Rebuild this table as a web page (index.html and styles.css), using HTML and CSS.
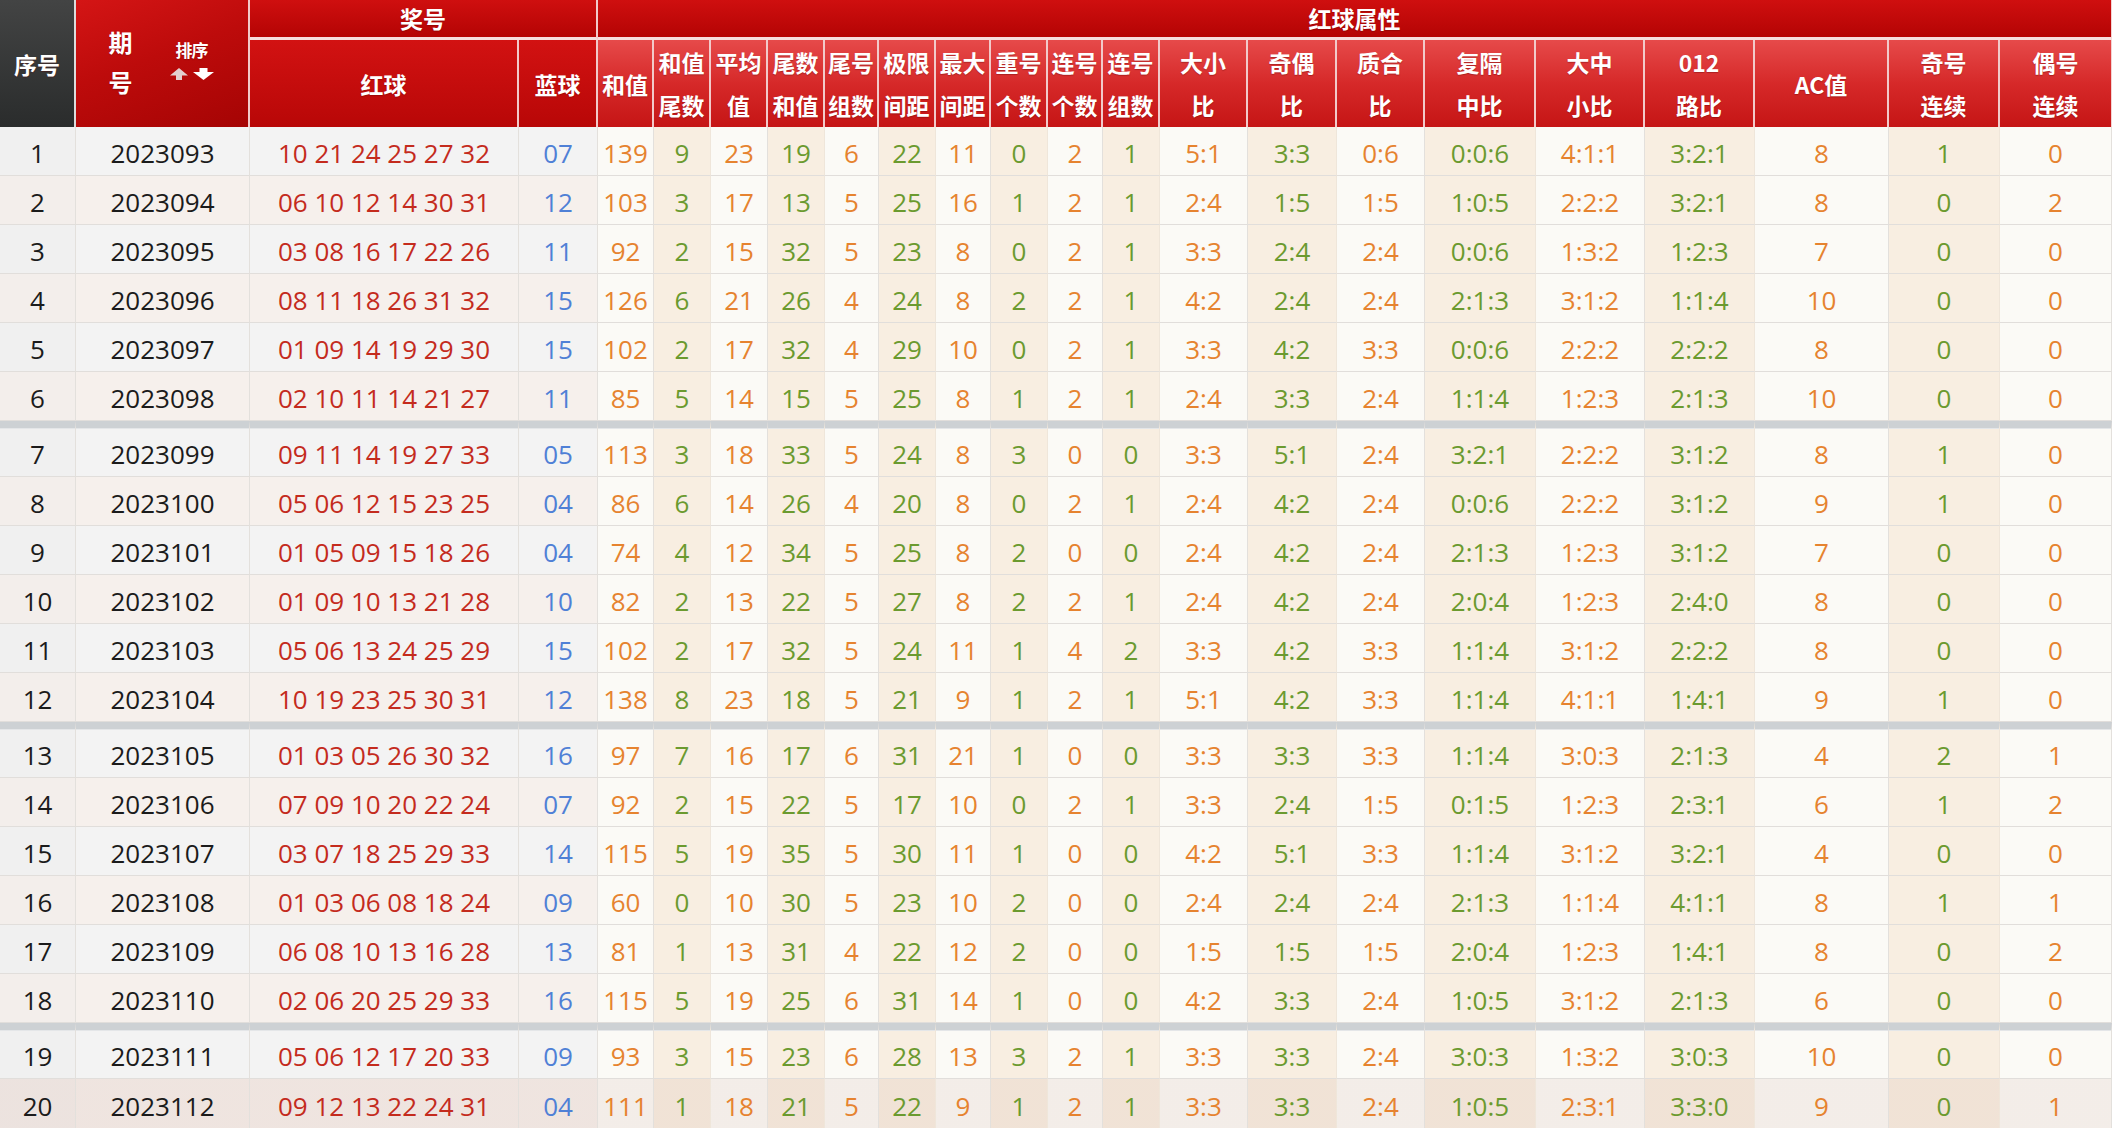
FILE: index.html
```html
<!DOCTYPE html>
<html lang="zh-CN">
<head>
<meta charset="utf-8">
<title>开奖号码属性</title>
<link rel="stylesheet" href="styles.css">
</head>
<body>
<table class="draw">
  <colgroup>
    <col class="c-seq"><col class="c-qh"><col class="c-red"><col class="c-blue">
    <col class="c-56"><col class="c-57"><col class="c-57"><col class="c-57"><col class="c-54">
    <col class="c-57"><col class="c-55"><col class="c-57"><col class="c-55"><col class="c-57">
    <col class="c-88"><col class="c-89"><col class="c-88">
    <col class="c-111"><col class="c-109"><col class="c-110">
    <col class="c-ac"><col class="c-111"><col class="c-112">
  </colgroup>
  <thead>
    <tr class="h1">
      <th rowspan="2" class="hseq">序号</th>
      <th rowspan="2" class="hqh">
        <div class="qh">
          <div class="qh-label"><span>期</span><span>号</span></div>
          <div class="sort">
            <span class="sort-t">排序</span>
            <span class="sort-arrows">
              <svg width="18" height="12" viewBox="0 0 18 12"><polygon points="9,0 18,7.5 12,7.5 12,12 6,12 6,7.5 0,7.5" fill="#e3cfcf"/></svg>
              <svg width="21" height="12" viewBox="0 0 21 12"><polygon points="6.5,0 14.5,0 14.5,4 21,4 10.5,12 0,4 6.5,4" fill="#ffffff"/></svg>
            </span>
          </div>
        </div>
      </th>
      <th colspan="2" class="hgrp">奖号</th>
      <th colspan="19" class="hgrp hlast">红球属性</th>
    </tr>
    <tr class="h2">
      <th class="hdark">红球</th>
      <th class="hdark">蓝球</th>
      <th class="hattr">和值</th>
      <th class="hattr">和值<br>尾数</th>
      <th class="hattr">平均<br>值</th>
      <th class="hattr">尾数<br>和值</th>
      <th class="hattr">尾号<br>组数</th>
      <th class="hattr">极限<br>间距</th>
      <th class="hattr">最大<br>间距</th>
      <th class="hattr">重号<br>个数</th>
      <th class="hattr">连号<br>个数</th>
      <th class="hattr">连号<br>组数</th>
      <th class="hattr">大小<br>比</th>
      <th class="hattr">奇偶<br>比</th>
      <th class="hattr">质合<br>比</th>
      <th class="hattr">复隔<br>中比</th>
      <th class="hattr">大中<br>小比</th>
      <th class="hattr">012<br>路比</th>
      <th class="hattr">AC值</th>
      <th class="hattr">奇号<br>连续</th>
      <th class="hattr hlast">偶号<br>连续</th>
    </tr>
  </thead>
  <tbody>
    <tr><td>1</td><td>2023093</td><td>10 21 24 25 27 32</td><td>07</td><td>139</td><td>9</td><td>23</td><td>19</td><td>6</td><td>22</td><td>11</td><td>0</td><td>2</td><td>1</td><td>5:1</td><td>3:3</td><td>0:6</td><td>0:0:6</td><td>4:1:1</td><td>3:2:1</td><td>8</td><td>1</td><td>0</td></tr>
    <tr><td>2</td><td>2023094</td><td>06 10 12 14 30 31</td><td>12</td><td>103</td><td>3</td><td>17</td><td>13</td><td>5</td><td>25</td><td>16</td><td>1</td><td>2</td><td>1</td><td>2:4</td><td>1:5</td><td>1:5</td><td>1:0:5</td><td>2:2:2</td><td>3:2:1</td><td>8</td><td>0</td><td>2</td></tr>
    <tr><td>3</td><td>2023095</td><td>03 08 16 17 22 26</td><td>11</td><td>92</td><td>2</td><td>15</td><td>32</td><td>5</td><td>23</td><td>8</td><td>0</td><td>2</td><td>1</td><td>3:3</td><td>2:4</td><td>2:4</td><td>0:0:6</td><td>1:3:2</td><td>1:2:3</td><td>7</td><td>0</td><td>0</td></tr>
    <tr><td>4</td><td>2023096</td><td>08 11 18 26 31 32</td><td>15</td><td>126</td><td>6</td><td>21</td><td>26</td><td>4</td><td>24</td><td>8</td><td>2</td><td>2</td><td>1</td><td>4:2</td><td>2:4</td><td>2:4</td><td>2:1:3</td><td>3:1:2</td><td>1:1:4</td><td>10</td><td>0</td><td>0</td></tr>
    <tr><td>5</td><td>2023097</td><td>01 09 14 19 29 30</td><td>15</td><td>102</td><td>2</td><td>17</td><td>32</td><td>4</td><td>29</td><td>10</td><td>0</td><td>2</td><td>1</td><td>3:3</td><td>4:2</td><td>3:3</td><td>0:0:6</td><td>2:2:2</td><td>2:2:2</td><td>8</td><td>0</td><td>0</td></tr>
    <tr><td>6</td><td>2023098</td><td>02 10 11 14 21 27</td><td>11</td><td>85</td><td>5</td><td>14</td><td>15</td><td>5</td><td>25</td><td>8</td><td>1</td><td>2</td><td>1</td><td>2:4</td><td>3:3</td><td>2:4</td><td>1:1:4</td><td>1:2:3</td><td>2:1:3</td><td>10</td><td>0</td><td>0</td></tr>
    <tr class="gs"><td>7</td><td>2023099</td><td>09 11 14 19 27 33</td><td>05</td><td>113</td><td>3</td><td>18</td><td>33</td><td>5</td><td>24</td><td>8</td><td>3</td><td>0</td><td>0</td><td>3:3</td><td>5:1</td><td>2:4</td><td>3:2:1</td><td>2:2:2</td><td>3:1:2</td><td>8</td><td>1</td><td>0</td></tr>
    <tr><td>8</td><td>2023100</td><td>05 06 12 15 23 25</td><td>04</td><td>86</td><td>6</td><td>14</td><td>26</td><td>4</td><td>20</td><td>8</td><td>0</td><td>2</td><td>1</td><td>2:4</td><td>4:2</td><td>2:4</td><td>0:0:6</td><td>2:2:2</td><td>3:1:2</td><td>9</td><td>1</td><td>0</td></tr>
    <tr><td>9</td><td>2023101</td><td>01 05 09 15 18 26</td><td>04</td><td>74</td><td>4</td><td>12</td><td>34</td><td>5</td><td>25</td><td>8</td><td>2</td><td>0</td><td>0</td><td>2:4</td><td>4:2</td><td>2:4</td><td>2:1:3</td><td>1:2:3</td><td>3:1:2</td><td>7</td><td>0</td><td>0</td></tr>
    <tr><td>10</td><td>2023102</td><td>01 09 10 13 21 28</td><td>10</td><td>82</td><td>2</td><td>13</td><td>22</td><td>5</td><td>27</td><td>8</td><td>2</td><td>2</td><td>1</td><td>2:4</td><td>4:2</td><td>2:4</td><td>2:0:4</td><td>1:2:3</td><td>2:4:0</td><td>8</td><td>0</td><td>0</td></tr>
    <tr><td>11</td><td>2023103</td><td>05 06 13 24 25 29</td><td>15</td><td>102</td><td>2</td><td>17</td><td>32</td><td>5</td><td>24</td><td>11</td><td>1</td><td>4</td><td>2</td><td>3:3</td><td>4:2</td><td>3:3</td><td>1:1:4</td><td>3:1:2</td><td>2:2:2</td><td>8</td><td>0</td><td>0</td></tr>
    <tr><td>12</td><td>2023104</td><td>10 19 23 25 30 31</td><td>12</td><td>138</td><td>8</td><td>23</td><td>18</td><td>5</td><td>21</td><td>9</td><td>1</td><td>2</td><td>1</td><td>5:1</td><td>4:2</td><td>3:3</td><td>1:1:4</td><td>4:1:1</td><td>1:4:1</td><td>9</td><td>1</td><td>0</td></tr>
    <tr class="gs"><td>13</td><td>2023105</td><td>01 03 05 26 30 32</td><td>16</td><td>97</td><td>7</td><td>16</td><td>17</td><td>6</td><td>31</td><td>21</td><td>1</td><td>0</td><td>0</td><td>3:3</td><td>3:3</td><td>3:3</td><td>1:1:4</td><td>3:0:3</td><td>2:1:3</td><td>4</td><td>2</td><td>1</td></tr>
    <tr><td>14</td><td>2023106</td><td>07 09 10 20 22 24</td><td>07</td><td>92</td><td>2</td><td>15</td><td>22</td><td>5</td><td>17</td><td>10</td><td>0</td><td>2</td><td>1</td><td>3:3</td><td>2:4</td><td>1:5</td><td>0:1:5</td><td>1:2:3</td><td>2:3:1</td><td>6</td><td>1</td><td>2</td></tr>
    <tr><td>15</td><td>2023107</td><td>03 07 18 25 29 33</td><td>14</td><td>115</td><td>5</td><td>19</td><td>35</td><td>5</td><td>30</td><td>11</td><td>1</td><td>0</td><td>0</td><td>4:2</td><td>5:1</td><td>3:3</td><td>1:1:4</td><td>3:1:2</td><td>3:2:1</td><td>4</td><td>0</td><td>0</td></tr>
    <tr><td>16</td><td>2023108</td><td>01 03 06 08 18 24</td><td>09</td><td>60</td><td>0</td><td>10</td><td>30</td><td>5</td><td>23</td><td>10</td><td>2</td><td>0</td><td>0</td><td>2:4</td><td>2:4</td><td>2:4</td><td>2:1:3</td><td>1:1:4</td><td>4:1:1</td><td>8</td><td>1</td><td>1</td></tr>
    <tr><td>17</td><td>2023109</td><td>06 08 10 13 16 28</td><td>13</td><td>81</td><td>1</td><td>13</td><td>31</td><td>4</td><td>22</td><td>12</td><td>2</td><td>0</td><td>0</td><td>1:5</td><td>1:5</td><td>1:5</td><td>2:0:4</td><td>1:2:3</td><td>1:4:1</td><td>8</td><td>0</td><td>2</td></tr>
    <tr><td>18</td><td>2023110</td><td>02 06 20 25 29 33</td><td>16</td><td>115</td><td>5</td><td>19</td><td>25</td><td>6</td><td>31</td><td>14</td><td>1</td><td>0</td><td>0</td><td>4:2</td><td>3:3</td><td>2:4</td><td>1:0:5</td><td>3:1:2</td><td>2:1:3</td><td>6</td><td>0</td><td>0</td></tr>
    <tr class="gs"><td>19</td><td>2023111</td><td>05 06 12 17 20 33</td><td>09</td><td>93</td><td>3</td><td>15</td><td>23</td><td>6</td><td>28</td><td>13</td><td>3</td><td>2</td><td>1</td><td>3:3</td><td>3:3</td><td>2:4</td><td>3:0:3</td><td>1:3:2</td><td>3:0:3</td><td>10</td><td>0</td><td>0</td></tr>
    <tr class="hl"><td>20</td><td>2023112</td><td>09 12 13 22 24 31</td><td>04</td><td>111</td><td>1</td><td>18</td><td>21</td><td>5</td><td>22</td><td>9</td><td>1</td><td>2</td><td>1</td><td>3:3</td><td>3:3</td><td>2:4</td><td>1:0:5</td><td>2:3:1</td><td>3:3:0</td><td>9</td><td>0</td><td>1</td></tr>
  </tbody>
</table>
</body>
</html>
```

FILE: styles.css
```css
html, body {
  margin: 0;
  padding: 0;
  background: #ffffff;
}

body {
  font-family: "Open Sans", "Noto Sans", "Noto Sans CJK SC", sans-serif;
  overflow: hidden;
}

.draw {
  width: 2112px;
  table-layout: fixed;
  border-collapse: separate;
  border-spacing: 0;
}

.c-seq { width: 76px; }
.c-qh { width: 174px; }
.c-red { width: 269px; }
.c-blue { width: 79px; }
.c-54 { width: 54px; }
.c-55 { width: 55px; }
.c-56 { width: 56px; }
.c-57 { width: 57px; }
.c-88 { width: 88px; }
.c-89 { width: 89px; }
.c-109 { width: 109px; }
.c-110 { width: 110px; }
.c-111 { width: 111px; }
.c-112 { width: 112px; }
.c-ac { width: 134px; }

.draw th,
.draw td {
  padding: 0;
  box-sizing: border-box;
  text-align: center;
  vertical-align: middle;
  white-space: nowrap;
  overflow: hidden;
}

/* ---------- header ---------- */
.draw thead th {
  color: #ffffff;
  font-family: "Noto Sans CJK SC", "Noto Sans", sans-serif;
  font-weight: 700;
  font-size: 23px;
  border-right: 2px solid #f2caca;
  text-shadow: 0 1px 1px rgba(90, 0, 0, 0.35);
}

.h1 { height: 40px; }
.h2 { height: 87px; }

.hgrp {
  background: linear-gradient(#cf0f0f, #b40404);
  border-bottom: 3px solid #f6dede;
  line-height: 1;
}

.h2 th { line-height: 43px; padding-top: 1px; }

.hseq {
  background: linear-gradient(#434444, #2a2c2c);
  font-size: 24px;
}

.draw thead th.hseq { border-right: 2px solid #dcdcdc; }

.hqh {
  background: linear-gradient(160deg, #d41515 0%, #bd0b0b 45%, #a50404 100%);
}

.hdark {
  background: linear-gradient(#d21212, #b80707);
}

.hattr {
  background: linear-gradient(#e64a4a 0%, #d62929 50%, #c51515 100%);
}

.draw thead th.hlast { border-right: 1px solid #f3d3d3; }

.qh {
  display: flex;
  align-items: center;
  justify-content: center;
  gap: 37px;
  padding-right: 2px;
}

.qh-label {
  display: flex;
  flex-direction: column;
  line-height: 40px;
  font-size: 24px;
  margin-top: -3px;
}

.sort {
  display: flex;
  flex-direction: column;
  align-items: center;
  gap: 9px;
  margin-top: -6px;
}

.sort-t {
  font-size: 17px;
  line-height: 18px;
  letter-spacing: -1px;
}

.sort-arrows {
  display: flex;
  align-items: center;
  gap: 5px;
}

.sort-arrows svg { display: block; }

/* ---------- body ---------- */
.draw tbody tr { height: 49px; }
.draw tbody tr.gs { height: 56px; }
.draw tbody tr.hl { height: 51px; }

.draw tbody td {
  font-size: 26px;
  line-height: 1.2;
  color: #1b1b1b;
  background-color: #f3f3f3;
  border-right: 1px solid #e3e0dc;
  border-bottom: 1px solid #e1dedb;
  padding-top: 5px;
}

.draw tbody tr.gs td {
  border-top: 7px solid #cdd1d4;
  box-shadow: inset 0 1px 0 #e4e6e8;
}

.draw tbody tr:nth-child(even) td:nth-child(-n+4) {
  background-color: #f6f0ec;
}

.draw tbody td:nth-child(1) { background-color: #f0f0f0; }
.draw tbody tr:nth-child(even) td:nth-child(1) { background-color: #f3eeeb; }

.draw tbody td:nth-child(3) {
  color: #c42b1d;
}

.draw tbody td:nth-child(4) {
  color: #4f80d6;
}

/* attribute columns: orange on white, green on beige */
.draw tbody td:nth-child(odd):nth-child(n+5) {
  color: #e6832f;
  background-color: #fbfaf6;
}

.draw tbody td:nth-child(even):nth-child(n+6) {
  color: #6b9a2f;
  background-color: #f8eee1;
  border-right-color: #efe6da;
}

.draw tbody tr.hl td {
  background-image: linear-gradient(rgba(190, 150, 140, 0.13), rgba(190, 150, 140, 0.13));
}
```
